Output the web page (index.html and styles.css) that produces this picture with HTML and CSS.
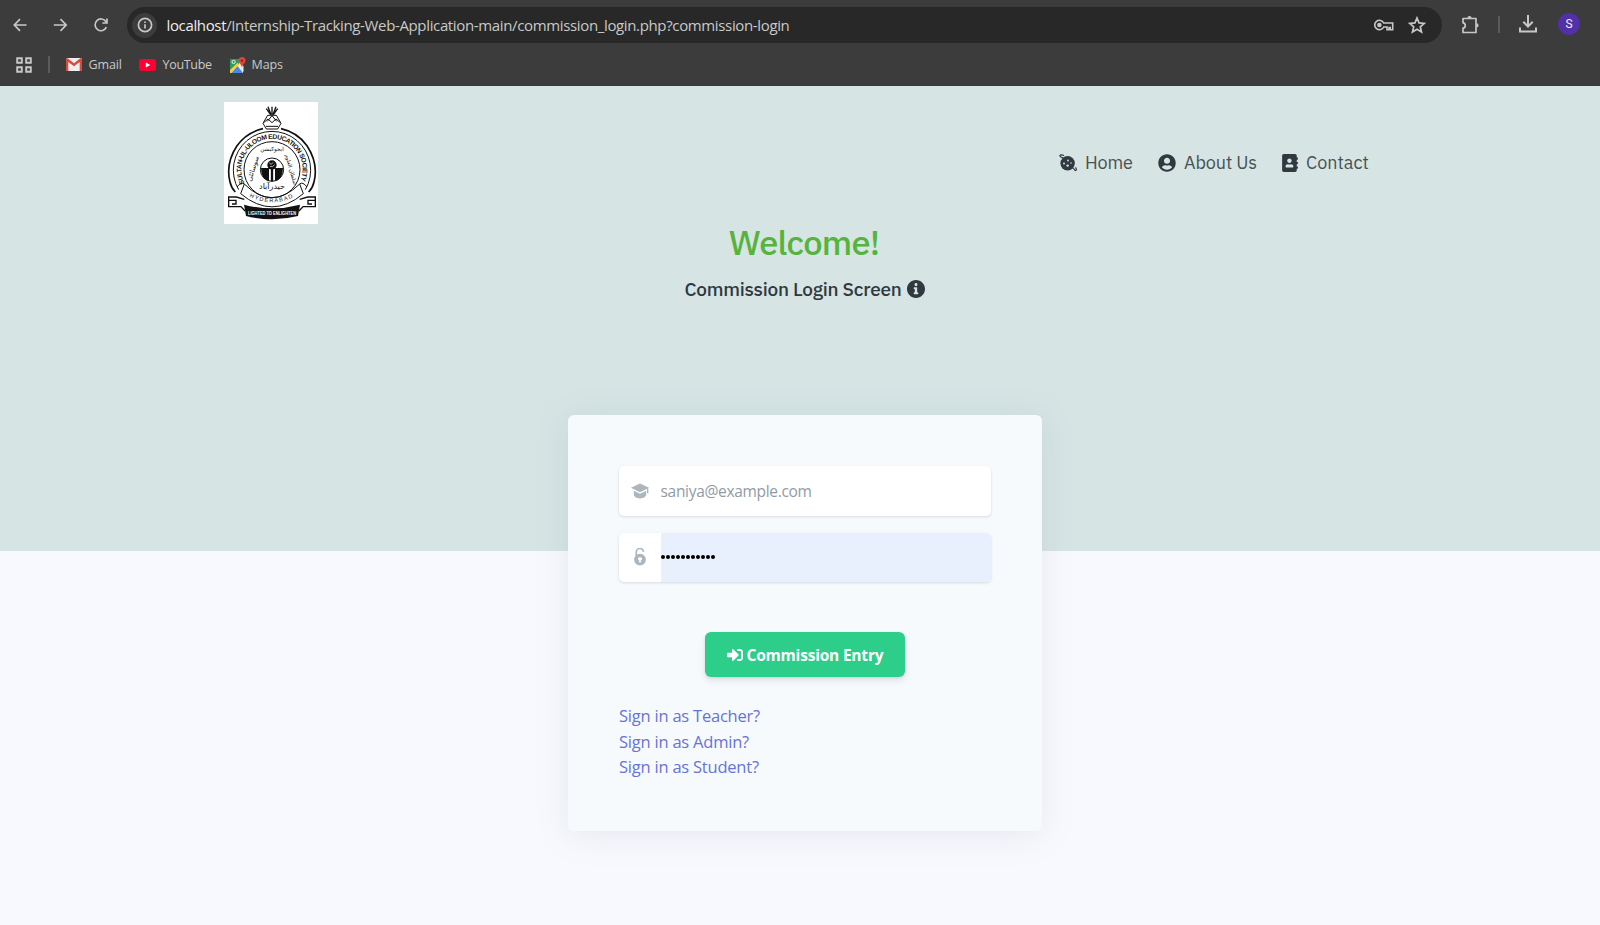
FILE: index.html
```html
<!DOCTYPE html>
<html lang="en">
<head>
<meta charset="utf-8">
<title>Commission Login</title>
<link rel="stylesheet" href="styles.css">
</head>
<body>
<header class="browser">
  <div class="toolbar">
    <nav class="nav-buttons">
      <svg width="16" height="16" viewBox="0 0 16 16" class="line"><path d="M14.500 8H2.500M8 2.200 2.300 8 8 13.800"/></svg>
      <svg width="16" height="16" viewBox="0 0 16 16" class="line"><path d="M.8 8h12.500M7.500 2.200 13.200 8l-5.700 5.800"/></svg>
      <svg width="16" height="16" viewBox="0 0 16 16" class="line"><path d="M13.400 10.200A5.900 5.900 0 1 1 13 4.700M14 1.500V6H9.300"/></svg>
    </nav>
    <div class="omnibox">
      <span class="site-info"><svg width="16" height="16" viewBox="0 0 16 16" class="line"><circle cx="8" cy="8" r="6.600"/><path d="M8 7.300v4.200M8 4.400v1.700"/></svg></span>
      <span class="url"><b>localhost</b>/Internship-Tracking-Web-Application-main/commission_login.php?commission-login</span>
      <svg class="key" width="20" height="14" viewBox="0 0 20 14" fill="none" stroke="#c7c7c7" stroke-width="1.600"><path d="M9.700 5A4.700 4.700 0 1 0 9.700 9H13v2.800h2V9.500h1.200v2.300h2.500V5z"/><circle cx="5.400" cy="7" r="1.500" fill="#c7c7c7"/></svg>
      <svg class="star" width="18" height="18" viewBox="0 0 18 18" fill="none" stroke="#c7c7c7" stroke-width="1.700"><path d="m9 2 2.050 4.900 5.250.45-4 3.450 1.200 5.150L9 13.200l-4.500 2.750 1.200-5.150-4-3.450 5.250-.45z"/></svg>
    </div>
    <div class="actions">
      <svg width="18" height="19" viewBox="0 0 18 19" fill="none" stroke="#c7c7c7" stroke-width="1.700"><path d="M2 3.500h13v14H2v-4.300c3-.4 3-5 0-5.400z" stroke-linejoin="round"/><path d="M6.400 3a2.100 2.100 0 0 1 4.200 0zM15.500 8.300a2.100 2.100 0 0 1 0 4.200z" fill="#c7c7c7" stroke="none"/></svg>
      <i class="bar"></i>
      <svg width="18" height="18" viewBox="0 0 18 18" fill="none" stroke="#c7c7c7" stroke-width="2"><path d="M9 0v11M4.300 6.800 9 11.500l4.700-4.700M1 12.500V16.500h16v-4"/></svg>
      <span class="avatar">S</span>
    </div>
  </div>
  <div class="bookmarks">
    <svg width="16" height="16" viewBox="0 0 16 16" fill="none" stroke="#c7c7c7" stroke-width="1.900"><path d="M1.200 1.200h4.600v4.600H1.200zM10.200 1.200h4.600v4.600h-4.600zM1.200 10.200h4.600v4.600H1.200zM10.200 10.200h4.600v4.600h-4.600z"/></svg>
    <i class="bar"></i>
    <a class="mark gmail"><svg width="16" height="13" viewBox="0 0 16 13"><rect width="16" height="13" rx="1.200" fill="#eee"/><path d="M0 1.200Q0 0 1.300 0L8 5.300 14.700 0Q16 0 16 1.200V13h-2.300V4L8 8.300 2.300 4v9H0z" fill="#d54b3f"/></svg><span>Gmail</span></a>
    <a class="mark youtube"><svg width="17" height="12" viewBox="0 0 17 12"><rect width="17" height="12" rx="3" fill="#ff0033"/><path d="m6.800 3.500 4.500 2.500-4.500 2.500z" fill="#fff"/></svg><span>YouTube</span></a>
    <a class="mark maps"><svg width="16" height="16" viewBox="0 0 16 16"><path d="M1 2h12v14H1z" fill="#e6e6e6"/><path d="M0 2h10L9 7 0 15z" fill="#2f9b57"/><path d="M1 16 7.500 9 13 16z" fill="#4a86e8"/><path d="m0 13 7.500-7.200 1.500 1.800L1.300 16H0z" fill="#f6cf43"/><path d="m8.500 8.500 5 6.500V9z" fill="#eee"/><circle cx="3.600" cy="5" r="1.600" fill="none" stroke="#eee"/><path d="M12 0a3.500 3.500 0 0 1 3.500 3.500C15.500 6 12.500 7 12 11c-.5-4-3.500-5-3.500-7.500A3.500 3.500 0 0 1 12 0z" fill="#dc4637"/><circle cx="12" cy="3.600" r="1.200" fill="#8d2018"/></svg><span>Maps</span></a>
  </div>
</header>

<main class="page">
  <section class="hero">
    <div class="topbar">
      <svg class="crest" width="94" height="122" viewBox="0 0 282 366">
        <defs>
          <path id="ring" d="M62 244A92 92 0 1 1 226 244"/>
          <path id="ribbon" d="M76 284Q144 318 212 284"/>
        </defs>
        <rect width="282" height="366" fill="#fff"/>
        <g fill="none" stroke="#111" stroke-width="3">
          <path d="M144 14v24M132 14l9 24M156 14l-9 24M127 20l13 18M161 20l-13 18" stroke-width="4"/>
          <path d="M131 40h26l14 24-10 17h-34l-10-17zM119 62l13-11 12 11 12-11 13 11M126 73h36M130 58l14-17 14 17"/>
          <path d="M117 80Q68 91 39 131Q4 184 18 240q4 18 16 30M171 80q49 11 78 51q35 53 21 109q-4 18-16 30" stroke-width="5"/>
          <path d="M44 263A116 116 0 1 1 244 263"/>
          <circle cx="144" cy="203" r="84"/>
          <path d="M39 255q13-17 22-9l-11 29M249 255q-13-17-22-9l11 29M61 246q82 82 166 0M50 275q94 79 188 0"/>
          <path d="M61 292l-24-7H14v29h37l12 13M227 292l24-7h23v29h-37l-12 13M14 295h22v11H24M274 295h-22v11h12" stroke-width="4"/>
        </g>
        <path d="M60 308q84 22 168 0l-6 34q-78 20-156 0z" fill="#111"/>
        <circle cx="144" cy="203" r="35" fill="#fff" stroke="#111" stroke-width="3"/>
        <path d="M111 198h24v39q-24-5-24-39zM177 198h-24v39q24-5 24-39z" fill="#111"/>
        <path d="M144 190v48" stroke="#111" stroke-width="7"/>
        <circle cx="144" cy="189" r="14" fill="#111"/>
        <path d="m136 183 6 4 5-6M138 193l7 1 7-6" fill="none" stroke="#fff" stroke-width="2"/>
        <g class="crest-text">
          <text font-size="20"><textPath href="#ring" textLength="366">SULTAN-UL-ULOOM EDUCATION SOCIETY</textPath></text>
          <text class="light" font-size="17"><textPath href="#ribbon" textLength="136">HYDERABAD</textPath></text>
          <text class="white" x="72" y="338" font-size="17" textLength="144" lengthAdjust="spacingAndGlyphs">LIGHTED TO ENLIGHTEN</text>
        </g>
        <g class="arabic" direction="rtl" text-anchor="middle">
          <text transform="translate(93 202) rotate(-72)" font-size="20">سوسائٹی</text>
          <text transform="translate(144 147)" font-size="17">ایجوکیشن</text>
          <text transform="translate(196 204) rotate(74)" font-size="16">سلطان العلوم</text>
          <text x="144" y="262" font-size="24">حیدرآباد</text>
        </g>
      </svg>
      <nav class="menu">
        <a><svg class="home-icon" width="18" height="18" viewBox="0 0 18 18"><path d="M5 4.200C2.500 3.300.5 2.500.9 1.600 1.200.6 3.200.6 5 1.500M14 13.900c1.900 1.600 1.400 2.900 2.800 2.600 1-.3.500-1.700-.3-3.100" fill="none" stroke="#303840" stroke-width="1.200"/><circle cx="8.600" cy="9.300" r="7.200" fill="#303840"/><g fill="#d6e4e4"><circle cx="5" cy="9.600" r="1"/><circle cx="9" cy="6.500" r=".9"/><circle cx="8.600" cy="11.600" r="1.200"/><circle cx="12" cy="9" r=".8"/></g></svg><span class="home-label">Home</span></a>
        <a><svg width="18" height="18" viewBox="0 0 496 512"><path d="M248 8C111 8 0 119 0 256s111 248 248 248 248-111 248-248S385 8 248 8zm0 96c48.600 0 88 39.400 88 88s-39.400 88-88 88-88-39.400-88-88 39.400-88 88-88zm0 344c-58.700 0-111.300-26.600-146.500-68.200 18.800-35.400 55.600-59.800 98.500-59.800 2.400 0 4.800.4 7.100 1.100 13 4.200 26.600 6.900 40.900 6.900 14.300 0 28-2.700 40.900-6.900 2.300-.7 4.700-1.100 7.100-1.100 42.900 0 79.700 24.400 98.500 59.800C359.300 421.400 306.700 448 248 448z"/></svg><span class="about-label">About Us</span></a>
        <a><svg width="16" height="18" viewBox="0 0 448 512"><path d="M436 160c6.600 0 12-5.400 12-12v-40c0-6.600-5.400-12-12-12h-20V48c0-26.500-21.500-48-48-48H48C21.500 0 0 21.500 0 48v416c0 26.500 21.500 48 48 48h320c26.500 0 48-21.500 48-48v-48h20c6.600 0 12-5.400 12-12v-40c0-6.600-5.400-12-12-12h-20v-64h20c6.600 0 12-5.400 12-12v-40c0-6.600-5.400-12-12-12h-20v-64h20zm-228-32c35.300 0 64 28.700 64 64s-28.700 64-64 64-64-28.700-64-64 28.700-64 64-64zm112 236.800c0 10.600-10 19.200-22.400 19.200H118.400C106 384 96 375.400 96 364.800v-19.200c0-31.800 30.100-57.600 67.200-57.600h5c12.300 5.100 25.700 8 39.800 8s27.600-2.900 39.800-8h5c37.100 0 67.200 25.800 67.200 57.600v19.200z"/></svg><span class="contact-label">Contact</span></a>
      </nav>
    </div>
    <h1>Welcome!</h1>
    <h2><span>Commission Login Screen</span><svg width="18" height="18" viewBox="8 8 496 496"><path d="M256 8C119.043 8 8 119.083 8 256c0 136.997 111.043 248 248 248s248-111.003 248-248C504 119.083 392.957 8 256 8zm0 85c23.196 0 42 18.804 42 42s-18.804 42-42 42-42-18.804-42-42 18.804-42 42-42zm62 296c0 6.627-5.373 12-12 12H206c-6.627 0-12-5.373-12-12v-30c0-6.627 5.373-12 12-12h18v-84h-18c-6.627 0-12-5.373-12-12v-30c0-6.627 5.373-12 12-12h70c6.627 0 12 5.373 12 12v126h18c6.627 0 12 5.373 12 12v30z"/></svg></h2>
  </section>

  <form class="card">
    <label class="field"><span class="field-icon"><svg width="18" height="18" viewBox="0 0 18 18"><path d="M9 1.500 18 5.800 9 10.200 0 5.800zM2.800 8.800l6.200 3 6.200-3v4.500c-2.500 4.400-9.900 4.400-12.400 0zM16 6.500h1.400v4.800H16z"/></svg></span><span class="email">saniya@example.com</span></label>
    <label class="field password"><span class="field-icon"><svg width="18" height="18" viewBox="0 0 18 18"><path d="M5.300 8V4.300a3.600 3.600 0 0 1 7.200-.4" fill="none" stroke="#adb5bd" stroke-width="1.700"/><path fill-rule="evenodd" d="M9 5.700a5.900 5.900 0 1 1 0 11.800A5.900 5.900 0 0 1 9 5.700zm0 3.500a1.700 1.700 0 0 0-.8 3.300v2.100h1.600v-2.100A1.700 1.700 0 0 0 9 9.200z"/></svg></span><span class="filled"><i></i><i></i><i></i><i></i><i></i><i></i><i></i><i></i><i></i><i></i><i></i></span></label>
    <button type="button" class="submit"><svg width="16" height="16" viewBox="0 0 512 512" fill="#fff"><path d="M416 448h-84c-6.600 0-12-5.400-12-12v-40c0-6.600 5.400-12 12-12h84c17.700 0 32-14.300 32-32V160c0-17.700-14.300-32-32-32h-84c-6.600 0-12-5.400-12-12V76c0-6.600 5.400-12 12-12h84c53 0 96 43 96 96v192c0 53-43 96-96 96zm-47-209L201 71c-15-15-41-4.500-41 17v96H24c-13.300 0-24 10.700-24 24v96c0 13.300 10.700 24 24 24h136v96c0 21.500 26 32 41 17l168-168c9.300-9.400 9.300-24.600 0-34z"/></svg><span>Commission Entry</span></button>
    <div class="links">
      <a>Sign in as Teacher?</a>
      <a>Sign in as Admin?</a>
      <a>Sign in as Student?</a>
    </div>
  </form>
</main>
</body>
</html>
```
FILE: styles.css
```css
* { box-sizing: border-box; }
body {
  margin: 0;
  height: 925px;
  overflow: hidden;
  background: #f8f9fe;
  font-family: "Open Sans", sans-serif;
}
svg { display: block; flex: none; }
.line { fill: none; stroke: #c7c7c7; stroke-width: 1.700; }

/* Browser frame */
.browser { height: 86px; background: #3c3c3c; color: #c9c9c9; }
.toolbar { display: flex; height: 50px; padding: 7px 20px 7px 12px; }
.nav-buttons { display: flex; gap: 24.500px; width: 117px; padding-top: 10px; }
.omnibox {
  display: flex;
  align-items: center;
  width: 1315px;
  height: 36px;
  padding: 0 16px 0 5px;
  border-radius: 18px;
  background: #282828;
  flex: none;
}
.site-info {
  display: grid;
  place-items: center;
  width: 25px;
  height: 25px;
  border-radius: 50%;
  background: #3c3c3c;
}
.url { flex: 1; margin-left: 9.500px; font-size: 15px; line-height: 35px; letter-spacing: -.355px; white-space: nowrap; }
.url b { font-weight: 400; color: #eee; }
.star { margin-left: 14px; }
.actions { display: flex; align-items: center; height: 34px; margin-left: 19px; }
.actions .bar { margin: 0 19px 0 19px; }
.bar { display: block; width: 2px; height: 17px; background: #5b5b5b; }
.avatar {
  width: 22px;
  height: 22px;
  margin-left: 21px;
  border-radius: 50%;
  background: #5230a8;
  color: #eee;
  font: 12px/22px Roboto, sans-serif;
  text-align: center;
}
.bookmarks { display: flex; align-items: center; height: 29px; padding-left: 16px; font-size: 12.500px; letter-spacing: -.1px; }
.bookmarks .bar { margin: 0 16px 0 15.500px; }
.mark { display: flex; align-items: center; }
.gmail { gap: 7px; width: 73px; }
.youtube { gap: 7px; width: 91px; letter-spacing: -.3px; }
.maps { gap: 6px; }

/* Banner */
.hero { height: 465px; background: #d6e4e4; color: #303840; font-family: "IBM Plex Sans", Roboto, sans-serif; }
.topbar { display: flex; justify-content: space-between; padding: 16px 231px 0 224px; }
.menu { display: flex; align-items: center; gap: 24px; height: 121px; font-size: 18px; fill: #303840; }
.menu a { display: flex; align-items: center; gap: 8px; }
.menu span { padding-bottom: 1px; white-space: nowrap; font-weight: 400; color: #485153; }
.home-label { width: 49px; letter-spacing: -.2px; }
.about-label { width: 74px; letter-spacing: -.1px; }
.contact-label { width: 63px; }
h1 {
  margin: 0 0 0 8px;
  height: 38px;
  color: #56b43c;
  font-size: 34.500px;
  font-weight: 500;
  line-height: 36px;
  letter-spacing: -.8px;
  text-align: center;
}
h2 {
  display: flex;
  align-items: center;
  justify-content: center;
  gap: 5px;
  height: 24px;
  margin: 15px 0 0 9px;
  fill: #303840;
  font-size: 19px;
  font-weight: 500;
  letter-spacing: -.23px;
}
.crest-text { font-family: "Liberation Sans", sans-serif; font-weight: 700; fill: #111; }
.crest-text .light { font-weight: 400; }
.crest-text .white { fill: #fff; }
.arabic { font-family: "DejaVu Sans", sans-serif; fill: #111; }

/* Sign-in card */
.card {
  position: relative;
  display: flex;
  flex-direction: column;
  width: 474px;
  height: 416px;
  margin: -136px 0 0 568px;
  padding: 51px 51px 0;
  border-radius: 6px;
  background: #f7fafc;
  box-shadow: 0 4px 34px rgba(110, 125, 140, .13);
}
.field {
  display: flex;
  height: 50px;
  overflow: hidden;
  border-radius: 5px;
  background: #fff;
  box-shadow: 0 1px 3px rgba(50, 50, 93, .16);
}
.field-icon { display: grid; place-items: center; width: 42px; fill: #adb5bd; }
.email { margin-left: -.5px; color: #8f9ba6; font-size: 15.500px; line-height: 50px; letter-spacing: -.31px; }
.password { height: 49px; margin-top: 16.500px; }
.filled { display: flex; flex: 1; align-items: center; gap: 1px; background: #e8f0fe; }
.filled i { width: 4px; height: 4px; border-radius: 50%; background: #000; }
.submit {
  display: flex;
  align-items: center;
  align-self: center;
  gap: 4px;
  width: 200px;
  height: 45px;
  margin: 50.500px 0 0;
  padding: 1px 0 0 21.500px;
  border: 0;
  border-radius: 6px;
  background: #2dce89;
  box-shadow: 0 4px 6px rgba(50, 50, 93, .11), 0 1px 3px rgba(0, 0, 0, .08);
  color: #fff;
  font: 700 15.500px "Open Sans", sans-serif;
  letter-spacing: -.2px;
  white-space: nowrap;
}
.links { display: flex; flex-direction: column; margin-top: 26px; color: #6673d8; font-size: 16.500px; line-height: 25.500px; letter-spacing: -.22px; }
```
